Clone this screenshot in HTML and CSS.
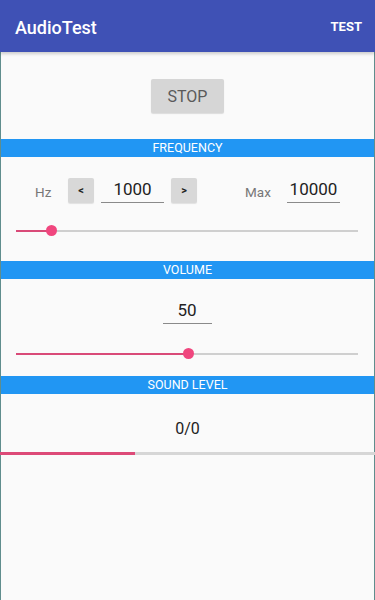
FILE: index.html
```html
<!DOCTYPE html>
<html lang="en">
<head>
    <meta charset="UTF-8">
    <meta name="viewport" content="width=device-width, initial-scale=1.0">
    <title>AudioTest</title>
    <link rel="stylesheet" href="styles.css">
</head>
<body>
    <div class="appbar">
        <span class="title">AudioTest</span>
        <span class="action">TEST</span>
    </div>

    <div class="screen">
        <div class="stop-row">
            <button class="stop">STOP</button>
        </div>

        <div class="band">FREQUENCY</div>
        <div class="freq-row">
            <span class="label hz">Hz</span>
            <button class="step">&lt;</button>
            <div class="field freq">1000</div>
            <button class="step">&gt;</button>
            <span class="label max">Max</span>
            <div class="field maxval">10000</div>
        </div>
        <div class="slider">
            <div class="fill" style="width: 35px"></div>
            <div class="thumb" style="left: 35px"></div>
        </div>

        <div class="band">VOLUME</div>
        <div class="vol-row">
            <div class="field vol">50</div>
        </div>
        <div class="slider volume">
            <div class="fill" style="width: 172px"></div>
            <div class="thumb" style="left: 172px"></div>
        </div>

        <div class="band">SOUND LEVEL</div>
        <div class="level">0/0</div>
        <div class="progress">
            <div class="bar" style="width: 135px"></div>
        </div>
    </div>
</body>
</html>
```

FILE: styles.css
```css
/* AudioTest screen */
body {
    margin: 0;
    background-color: #fafafa;
    font-family: Roboto, "Noto Sans", sans-serif;
    height: 600px;
    overflow: hidden;
}

.appbar {
    height: 52px;
    background-color: #3f51b5;
    color: #fff;
    display: flex;
    align-items: center;
    justify-content: space-between;
    padding: 0 13px 0 15px;
    box-shadow: 0 2px 3px rgba(0, 0, 0, 0.18);
    position: relative;
    z-index: 1;
}

.title {
    font-size: 18px;
    font-weight: 500;
    margin-top: 2px;
}

.action {
    font-size: 13px;
    font-weight: 700;
}

.screen {
    height: 548px;
    border-left: 1px solid #5f8d8d;
    border-right: 1px solid #5f8d8d;
}

.stop-row {
    display: flex;
    justify-content: center;
    padding: 27px 0 26px;
}

.stop {
    width: 73px;
    height: 34px;
    border: none;
    border-radius: 2px;
    background-color: #d6d6d6;
    color: #5a5a5a;
    font-family: inherit;
    font-size: 16px;
    box-shadow: 0 1px 1px rgba(0, 0, 0, 0.12);
    padding: 0;
}

.band {
    height: 18px;
    line-height: 18px;
    background-color: #2196f3;
    color: #fff;
    text-align: center;
    font-size: 12.5px;
}

.freq-row {
    display: flex;
    align-items: center;
    height: 25px;
    margin-top: 21px;
    padding-left: 34px;
}

.label {
    color: #777;
    font-size: 13.5px;
    margin-top: 2px;
}

.hz {
    width: 33px;
}

.max {
    width: 42px;
    margin-left: 48px;
}

.step {
    width: 26px;
    height: 25px;
    border: none;
    border-radius: 2px;
    background-color: #d8d8d8;
    color: #222;
    font-family: inherit;
    font-size: 11px;
    font-weight: 700;
    padding: 0;
    box-shadow: 0 1px 1px rgba(0, 0, 0, 0.1);
}

.field {
    height: 24px;
    line-height: 22px;
    border-bottom: 1px solid #8a8a8a;
    font-size: 17px;
    color: #222;
    text-align: center;
}

.freq {
    width: 63px;
    margin: 0 7px;
}

.maxval {
    width: 53px;
}

.slider {
    position: relative;
    height: 2px;
    margin: 27px 16px 29px 15px;
    background-color: #cfcfcf;
}

.slider.volume {
    margin-top: 29px;
    margin-bottom: 21px;
}

.fill {
    height: 2px;
    background-color: #d94a78;
}

.thumb {
    position: absolute;
    top: -5px;
    width: 11px;
    height: 11px;
    margin-left: -5px;
    border-radius: 50%;
    background-color: #f0467e;
}

.vol-row {
    display: flex;
    justify-content: center;
    margin-top: 20px;
    padding-right: 1px;
}

.vol {
    width: 49px;
}

.level {
    text-align: center;
    font-size: 16px;
    color: #222;
    margin-top: 25px;
    height: 20px;
}

.progress {
    height: 3px;
    margin: 13px -1px 0;
    background-color: #d6d6d6;
}

.bar {
    height: 3px;
    background-color: #dd4a78;
}
```
